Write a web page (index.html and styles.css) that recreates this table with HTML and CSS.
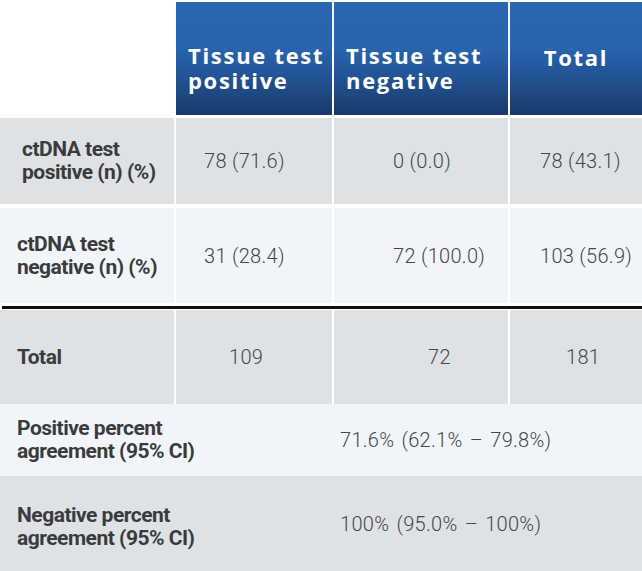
FILE: index.html
```html
<!DOCTYPE html>
<html lang="en">
<head>
<meta charset="utf-8">
<title>ctDNA vs tissue test agreement</title>
<link rel="stylesheet" href="styles.css">
</head>
<body>
<div class="table">
  <div class="row head-row">
    <div class="blank"></div>
    <div class="hcell two">Tissue test positive</div>
    <div class="hcell two">Tissue test negative</div>
    <div class="hcell one">Total</div>
  </div>

  <div class="row r1 grey">
    <div class="label in">ctDNA test<br>positive (n) (%)</div>
    <div class="val c1">78 (71.6)</div>
    <div class="val c2">0 (0.0)</div>
    <div class="val c3">78 (43.1)</div>
  </div>

  <div class="row r2 light">
    <div class="label">ctDNA test<br>negative (n) (%)</div>
    <div class="val c1">31 (28.4)</div>
    <div class="val c2">72 (100.0)</div>
    <div class="val c3">103 (56.9)</div>
  </div>

  <div class="rule"></div>

  <div class="row r3 grey">
    <div class="label">Total</div>
    <div class="val t1">109</div>
    <div class="val t2">72</div>
    <div class="val t3">181</div>
  </div>

  <div class="row span-row r4 light-fill">
    <div class="label">Positive percent<br>agreement (95% CI)</div>
    <div class="val wide">71.6% (62.1% – 79.8%)</div>
  </div>

  <div class="row span-row r5 grey-fill">
    <div class="label">Negative percent<br>agreement (95% CI)</div>
    <div class="val wide">100% (95.0% – 100%)</div>
  </div>
</div>
</body>
</html>
```

FILE: styles.css
```css
html, body {
  margin: 0;
  padding: 0;
  background: #ffffff;
}

.table {
  width: 642px;
  padding-top: 2px;
  display: flex;
  flex-direction: column;
}

.row {
  display: grid;
  grid-template-columns: 174px 156px 174px 132px;
  column-gap: 2px;
}

.head-row {
  height: 113px;
}

.hcell {
  background: linear-gradient(to bottom, #2a66b1 0%, #2863ad 42%, #214f8d 72%, #183a69 100%);
  color: #ffffff;
  font-family: "Open Sans", "DejaVu Sans", sans-serif;
  font-weight: 700;
  font-size: 22px;
  line-height: 25px;
  letter-spacing: 1.7px;
  display: flex;
  align-items: center;
}

.hcell.two {
  padding: 18px 0 0 12px;
}

.hcell.one {
  justify-content: center;
  padding-bottom: 2px;
}

.grey > div { background: #dfe2e5; }
.light > div { background: #f1f5f9; }
.grey-fill { background: #dfe2e5; }
.light-fill { background: #f1f5f9; }

.r1 { margin-top: 3px; height: 86px; }
.r2 { margin-top: 4px; height: 95px; }
.r3 { margin-top: 1px; height: 94px; }
.r4 { height: 72px; }
.r5 { height: 95px; }

.rule {
  margin: 3px 0 0 2px;
  height: 3px;
  background: #111111;
}

.label {
  display: flex;
  align-items: center;
  padding-left: 17px;
  font-family: "Roboto", "Liberation Sans", sans-serif;
  font-weight: 700;
  font-size: 21px;
  line-height: 23px;
  color: #3a3b3c;
  letter-spacing: -0.5px;
  white-space: nowrap;
}

.label.in { padding-left: 22px; }

.r5 .label { padding-top: 6px; }

.val {
  display: flex;
  align-items: center;
  font-family: "Roboto", "Liberation Sans", sans-serif;
  font-weight: 300;
  font-size: 20px;
  color: #454648;
  letter-spacing: 0.3px;
  white-space: nowrap;
}

.c1 { padding-left: 28px; }
.c2 { padding-left: 59px; }
.c3 { padding-left: 30px; }
.t1 { padding-left: 53px; }
.t2 { padding-left: 94px; }
.t3 { padding-left: 56px; }

.span-row {
  grid-template-columns: 174px 1fr;
}

.wide {
  padding-left: 164px;
  word-spacing: 2px;
}
```
